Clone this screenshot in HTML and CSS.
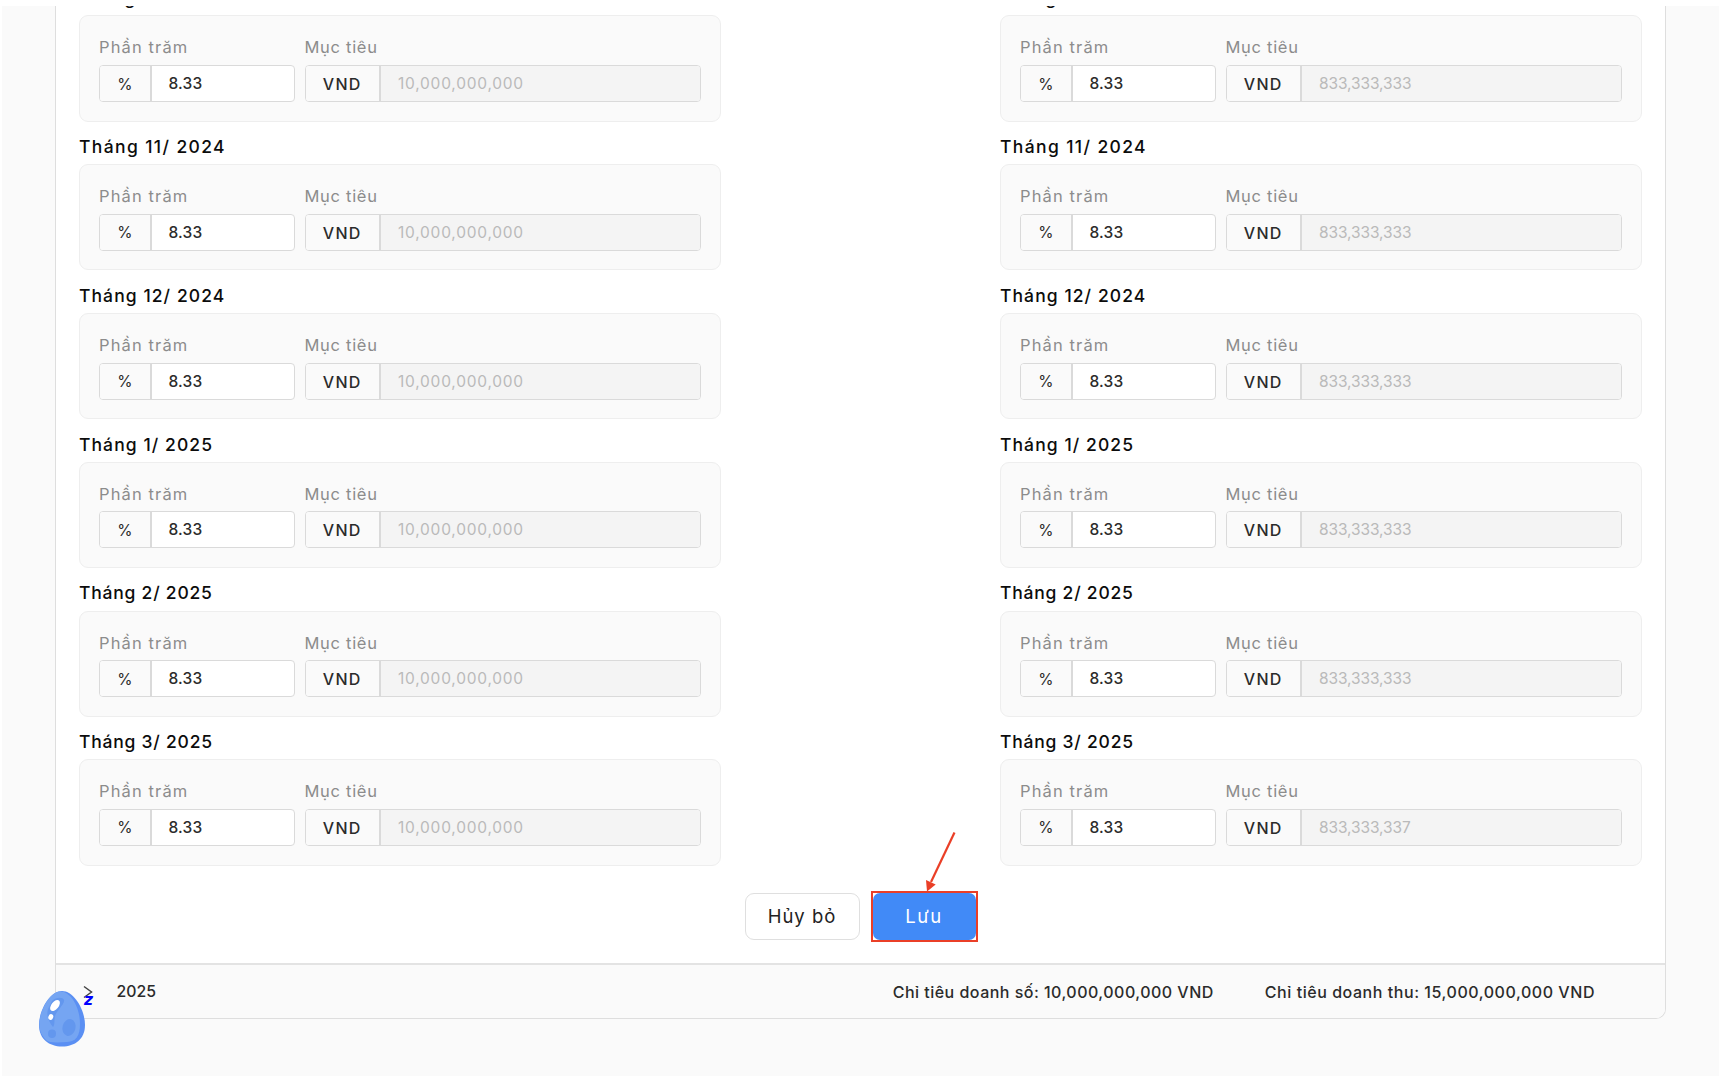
FILE: index.html
```
<!DOCTYPE html>
<html lang="vi">
<head>
<meta charset="utf-8">
<title>Chỉ tiêu doanh số</title>
<link rel="stylesheet" href="styles.css">
</head>
<body>
<main class="page">
  <section class="panel">
    <div class="columns">
      <div class="column" data-target="10,000,000,000" data-last="10,000,000,000"></div>
      <div class="column column-revenue" data-target="833,333,333" data-last="833,333,337"></div>
    </div>
    <div class="actions">
      <button class="btn btn-cancel">Hủy bỏ</button>
      <div class="highlight">
        <button class="btn btn-save">Lưu</button>
        <svg class="arrow" width="34" height="62" viewBox="0 0 34 62">
          <path d="M30.500 1.500L7 51" fill="none" stroke="#ea3f27" stroke-width="2.200"/>
          <path d="M2 49L11.700 53.500L3 60.500Z" fill="#ea3f27"/>
        </svg>
      </div>
    </div>
    <footer class="year-row">
      <svg class="chevron" width="10" height="14" viewBox="0 0 10 14"><path d="M1 1.500L8.500 7L1 12.500" fill="none" stroke="#444" stroke-width="1.500"/></svg>
      <span class="year">2025</span>
      <span class="sum sum-sales">Chỉ tiêu doanh số: 10,000,000,000 VND</span>
      <span class="sum sum-revenue">Chỉ tiêu doanh thu: 15,000,000,000 VND</span>
    </footer>
  </section>
  <div class="mascot">
    <svg width="48" height="58" viewBox="0 0 48 58">
      <path d="M24 1C36 1 47 20 47 35C47 49 37 56.500 24 56.500C11 56.500 1 49 1 35C1 20 12 1 24 1Z" fill="#5a8ff3"/>
      <path d="M22 1.500C33 1 42 18 42 34C42 46 38 51.500 29 52C20 52.500 11 53 8 50C4 46 1.300 41 1.300 35C1.300 20 12 2 22 1.500Z" fill="#75a5f2"/>
      <path d="M14 11C18 7 25 7 26 10C27 14 19 20 17 26C16 31 17 35 15 37C11 32 8 26 10 19Z" fill="#6397ee"/>
      <ellipse cx="31" cy="37.500" rx="6.500" ry="8.500" transform="rotate(15 31 37.500)" fill="#6397ee"/>
      <ellipse cx="14" cy="43.700" rx="4" ry="4.200" fill="#6397ee"/>
      <ellipse cx="17" cy="15.500" rx="3.600" ry="6.500" transform="rotate(38 17 15.500)" fill="#fff"/>
      <ellipse cx="12.800" cy="27" rx="2.400" ry="3" transform="rotate(20 12.800 27)" fill="#fff"/>
    </svg>
    <span class="sleep">z</span>
  </div>
</main>
<script src="months.js"></script>
</body>
</html>
```

FILE: styles.css
```
* { box-sizing: border-box; }
body {
  margin: 0;
  padding: 6px 1px 0 2px;
  height: 1076px;
  overflow: hidden;
  background: #fff;
  font-family: Inter, "Liberation Sans", sans-serif;
  color: #2b2b2b;
}
.page {
  position: relative;
  height: 1070px;
  padding: 0 53px;
  background: #fafafa;
  overflow: hidden;
}
.panel {
  display: flex;
  flex-direction: column;
  height: 1013.300px;
  overflow: hidden;
  border: 1px solid #dedede;
  border-top: 0;
  border-radius: 0 0 10px 10px;
  background: #fff;
}
.columns {
  display: flex;
  justify-content: space-between;
  margin-top: -33.200px;
  padding: 0 23.500px 0 23px;
}
.column { width: 641.500px; }
.month { height: 148.800px; }
.month-title {
  height: 42.500px;
  margin: 0;
  padding-top: 7.300px;
  font-size: 17.500px;
  font-weight: 500;
  line-height: 35.200px;
  letter-spacing: .78px;
  color: #0c0c0c;
  white-space: nowrap;
}
.month:nth-child(2) .month-title { letter-spacing: 1.380px; }
.month:nth-child(3) .month-title { letter-spacing: 1.080px; }
.month:nth-child(4) .month-title { letter-spacing: 1.080px; }
.card {
  display: flex;
  gap: 10px;
  height: 106.300px;
  padding: 19px 19px 0;
  border: 1px solid #eee;
  border-radius: 9px;
  background: #fafafa;
}
.field-percent { width: 195.500px; }
.field-target { flex: 1; }
.label {
  height: 29.700px;
  font-size: 16.500px;
  line-height: 24.600px;
  color: #8c8c8c;
  white-space: nowrap;
}
.field-percent .label { letter-spacing: 1.120px; }
.field-target .label { letter-spacing: .7px; }
.group {
  display: flex;
  height: 37px;
  border: 1px solid #dadada;
  border-radius: 4px;
  overflow: hidden;
  background: #fff;
}
.unit {
  display: flex;
  align-items: center;
  justify-content: center;
  padding-top: 1px;
  border-right: 2px solid #dadada;
  background: #fafafa;
  font-size: 15.500px;
}
.field-percent .unit { width: 51.500px; }
.field-target .unit {
  width: 75.500px;
  font-size: 16px;
  font-weight: 500;
  letter-spacing: 1.300px;
}
.value {
  flex: 1;
  padding-left: 17px;
  font-size: 15.500px;
  font-weight: 500;
  line-height: 36px;
  letter-spacing: .15px;
}
.disabled {
  background: #f4f4f4;
  color: #bababa;
  font-weight: 400;
  letter-spacing: .77px;
}
.column-revenue .disabled { letter-spacing: -.1px; }
.actions {
  display: flex;
  align-items: center;
  gap: 11px;
  margin-top: 24px;
  padding-left: 688.500px;
  height: 53px;
}
.btn {
  font-family: inherit;
  font-size: 18.500px;
  border-radius: 9px;
  padding: 0;
}
.btn-cancel {
  width: 115px;
  height: 47px;
  border: 1px solid #dfdfdf;
  background: #fff;
  color: #222;
  letter-spacing: 1px;
}
.highlight {
  position: relative;
  width: 107px;
  height: 51px;
  border: 2px solid #ea3f27;
}
.btn-save {
  width: 103px;
  height: 47px;
  border: 0;
  border-radius: 7px;
  background: #418af7;
  color: #fff;
  letter-spacing: 1.600px;
}
.arrow {
  position: absolute;
  left: 51px;
  top: -62px;
}
.year-row {
  display: flex;
  align-items: center;
  height: 55.500px;
  margin-top: auto;
  padding: 0 70px 0 27px;
  border-top: 2px solid #e3e3e3;
  background: #fafafa;
  font-size: 16px;
  font-weight: 500;
  white-space: nowrap;
}
.year { margin-left: 23.500px; letter-spacing: 0; font-size: 15.800px; }
.sum-sales { margin-left: auto; letter-spacing: .48px; }
.sum-revenue { margin-left: 51px; letter-spacing: .55px; }
.mascot {
  position: absolute;
  left: 36px;
  top: 984px;
  width: 60px;
  height: 60px;
}
.sleep {
  position: absolute;
  left: 46px;
  top: 0;
  font: italic 900 15.500px/20px "DejaVu Sans", sans-serif;
  color: #00f;
}
```

FILE: months.js
```
const months = ['10/ 2024', '11/ 2024', '12/ 2024', '1/ 2025', '2/ 2025', '3/ 2025'];

document.querySelectorAll('.column').forEach((column) => {
  column.innerHTML = months.map((month, i) => {
    const target = i === months.length - 1 ? column.dataset.last : column.dataset.target;
    return `
      <div class="month">
        <h3 class="month-title">Tháng ${month}</h3>
        <div class="card">
          <div class="field-percent">
            <div class="label">Phần trăm</div>
            <div class="group"><span class="unit">%</span><span class="value">8.33</span></div>
          </div>
          <div class="field-target">
            <div class="label">Mục tiêu</div>
            <div class="group"><span class="unit">VND</span><span class="value disabled">${target}</span></div>
          </div>
        </div>
      </div>`;
  }).join('');
});
```
